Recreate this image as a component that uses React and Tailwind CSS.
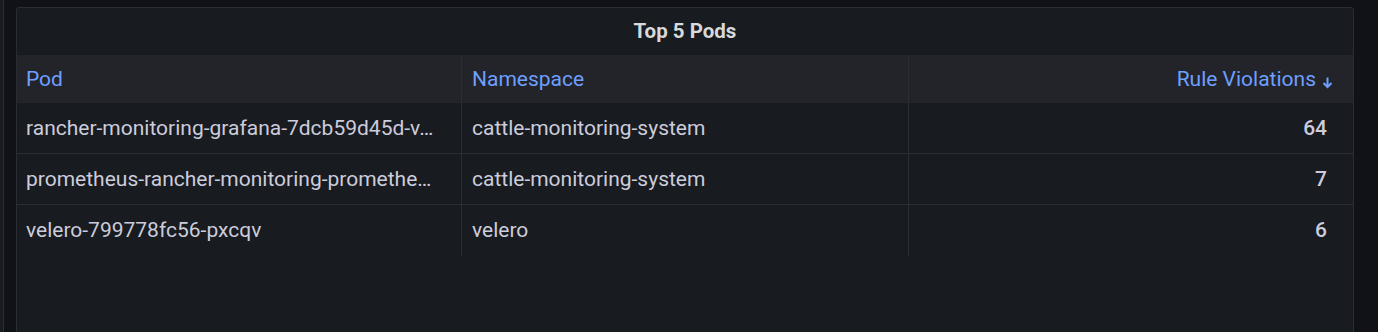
import React from 'react';

// pod names are shown as Grafana cuts them in the narrow first column
const rows = [
    { pod: 'rancher-monitoring-grafana-7dcb59d45d-v…', ns: 'cattle-monitoring-system', count: 64 },
    { pod: 'prometheus-rancher-monitoring-promethe…', ns: 'cattle-monitoring-system', count: 7 },
    { pod: 'velero-799778fc56-pxcqv', ns: 'velero', count: 6 },
];

export default function App() {
    return (
        <div className="w-[1378px] h-[332px] overflow-hidden bg-[#111217] flex font-['Roboto',sans-serif]">
            {/* neighbouring panel edge */}
            <div className="w-[4px] h-full bg-[#181b1f] border-r border-[#2a2d33] shrink-0" />

            <div className="ml-[12px] mt-[7px] w-[1338px] h-[340px] bg-[#181b1f] border border-[#2a2d33] rounded-[3px] flex flex-col">
                {/* Title */}
                <div className="h-[47px] flex items-center justify-center text-[#d8d9da] font-bold text-[20.5px]">
                    Top 5 Pods
                </div>

                {/* Header */}
                <div className="grid grid-cols-[444px_447px_1fr] h-[48px] bg-[#222429] text-[#6e9fff] text-[21px]">
                    <div className="flex items-center px-[9px] pt-[2px]">Pod</div>
                    <div className="flex items-center px-[10px] pt-[2px] border-l border-[#2a2d33]">Namespace</div>
                    <div className="flex items-center justify-end pr-[19px] pt-[2px] border-l border-[#2a2d33]">
                        Rule Violations
                        <svg width="13" height="14" viewBox="0 0 13 14" className="ml-[5px] mt-[4px]">
                            <path d="M6.5 2.5v9.5M2.5 8l4 4 4-4" fill="none" stroke="#6e9fff" strokeWidth="2" />
                        </svg>
                    </div>
                </div>

                {/* Rows */}
                {rows.map((r, i) => (
                    <div
                        key={r.pod}
                        className={`grid grid-cols-[444px_447px_1fr] h-[51px] text-[#ccccdc] text-[21px] ${i < rows.length - 1 ? 'border-b border-[#2a2d33]' : ''}`}
                    >
                        <div className="flex items-center pl-[9px] pt-[1px] whitespace-nowrap">{r.pod}</div>
                        <div className="flex items-center px-[10px] pt-[1px] border-l border-[#2a2d33]">{r.ns}</div>
                        <div className="flex items-center justify-end pr-[26px] pt-[1px] border-l border-[#2a2d33] font-medium">{r.count}</div>
                    </div>
                ))}
            </div>
        </div>
    );
}
